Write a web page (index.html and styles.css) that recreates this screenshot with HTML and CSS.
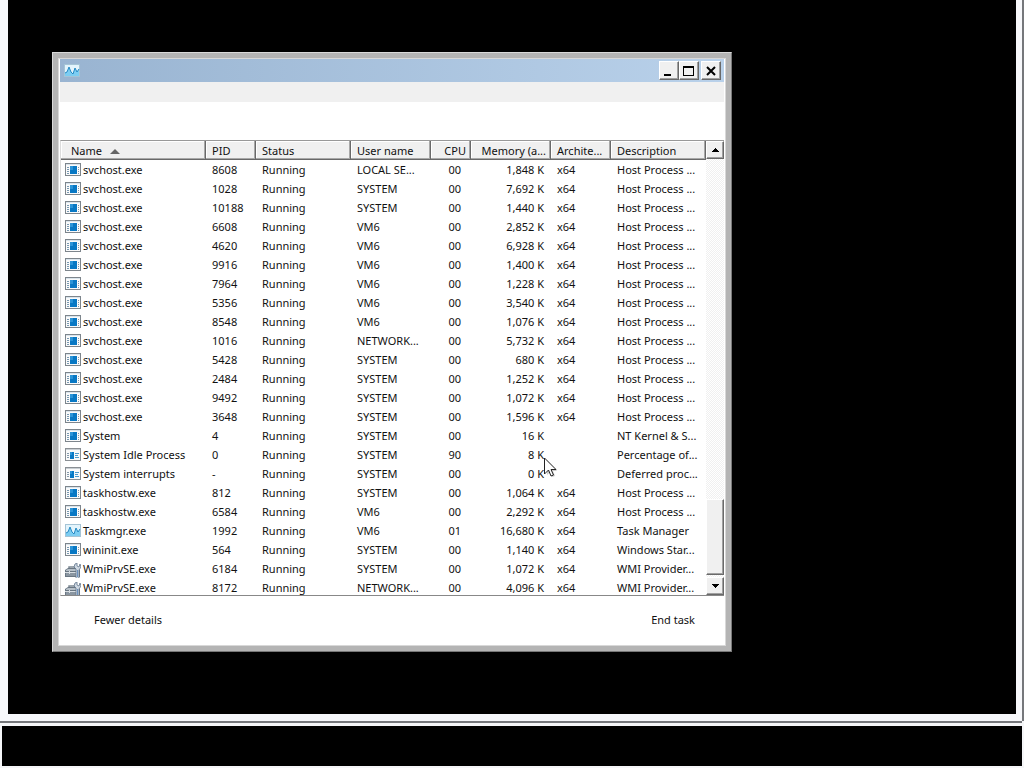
FILE: index.html
```html
<!DOCTYPE html>
<html lang="en">
<head>
<meta charset="utf-8">
<title>Task Manager</title>
<link rel="stylesheet" href="styles.css">
</head>
<body>
<svg class="defs" aria-hidden="true">
  <symbol id="app" viewBox="0 0 16 13">
    <path fill="#7d858c" d="M0 0h16v13H0z"/><path fill="#fafafa" d="M1 2h14v10H1z"/>
    <path fill="#d9e4ec" d="M1 1h14v1H1z"/><path fill="#0878c4" d="M5 3h7v8H5z"/><path fill="#2b94d8" d="M5 3h3v4H5z"/>
    <path stroke="#7898b0" d="M2 4.5h2M2 6.5h2M2 8.5h2M2 10.5h2M13 4.5h1M13 6.5h1M13 8.5h1M13 10.5h1"/>
  </symbol>
  <symbol id="sys" viewBox="0 0 16 13">
    <path fill="#8a8f94" d="M0 0h16v13H0z"/><path fill="#fafafa" d="M1 2h14v10H1z"/>
    <path fill="#c8ced3" d="M1 1h14v1H1z"/><path fill="#0878c4" d="M5 4h4v7H5z"/><path fill="#2b94d8" d="M5 4h2v3H5z"/>
    <path stroke="#8499aa" d="M2 5.5h2M2 7.5h2M2 9.5h2"/><path stroke="#4d9bcd" d="M10 5.5h4M10 7.5h3M10 9.5h4"/>
  </symbol>
  <symbol id="chart" viewBox="0 0 16 13">
    <path fill="#a5c4d6" d="M0 0h16v13H0z"/><path fill="#e3f4fc" d="M1 1h14v11H1z"/>
    <path fill="#7ccdf2" d="M1 9l2-1 2-5 2 5 2 2 2-6 2 4 2-3v7H1z"/>
    <path fill="none" stroke="#2389c4" d="M1 9l2-1 2-5 2 5 2 2 2-6 2 4 2-3"/>
  </symbol>
  <symbol id="tool" viewBox="0 0 16 16">
    <path fill="none" stroke="#7c8893" stroke-width="1.5" d="M4 6V4h6v2"/>
    <path fill="#697682" d="M0 7l3-2h10l2 2v7H0z"/><path fill="#b7c0c8" d="M1 7l2-1h9l-1 2H1z"/>
    <path fill="#8a96a1" d="M1 10h10v3H1z"/><path stroke="#d8dee3" d="M0 9.5h11M4.500 8v3"/>
    <path fill="#cfd9e3" stroke="#60748a" stroke-width=".8" d="M10 1l2-1v3l2 1 1-3 1 3-2 3v8l-2 1-1-1V6L9 4z"/>
    <path stroke="#6c92c0" d="M12.500 7v7"/>
  </symbol>
</svg>
<div class="screen">
  <main class="desktop">
    <section class="window" aria-label="Task Manager">
      <header class="titlebar">
        <svg class="title-icon"><use href="#chart"/></svg>
        <div class="controls">
          <button aria-label="Minimize"><svg viewBox="0 0 16 14"><path fill="#000" d="M3 10h7v2H3z"/></svg></button>
          <button aria-label="Maximize"><svg viewBox="0 0 16 14"><path fill="#000" fill-rule="evenodd" d="M2 2h11v10H2zM3 4v7h9V4z"/></svg></button>
          <button class="close" aria-label="Close"><svg viewBox="0 0 16 14"><path fill="none" stroke="#000" stroke-width="2" d="M4 3l8 8M12 3l-8 8"/></svg></button>
        </div>
      </header>
      <div class="menubar"></div>
      <div class="tabs"></div>
      <div class="list">
        <div class="viewport">
        <table>
          <colgroup><col class="c-name"><col class="c-pid"><col class="c-status"><col class="c-user"><col class="c-cpu"><col class="c-mem"><col class="c-arch"><col></colgroup>
          <thead><tr><th class="first">Name<svg class="sort" viewBox="0 0 10 5"><path fill="#666" d="M5 0l5 5H0z"/></svg></th><th>PID</th><th>Status</th><th>User name</th><th class="num">CPU</th><th class="num">Memory (a...</th><th>Archite...</th><th>Description</th></tr></thead>
          <tbody>
            <tr><td><svg><use href="#app"/></svg>svchost.exe</td><td>8608</td><td>Running</td><td>LOCAL SE...</td><td>00</td><td>1,848 K</td><td>x64</td><td>Host Process ...</td></tr>
            <tr><td><svg><use href="#app"/></svg>svchost.exe</td><td>1028</td><td>Running</td><td>SYSTEM</td><td>00</td><td>7,692 K</td><td>x64</td><td>Host Process ...</td></tr>
            <tr><td><svg><use href="#app"/></svg>svchost.exe</td><td>10188</td><td>Running</td><td>SYSTEM</td><td>00</td><td>1,440 K</td><td>x64</td><td>Host Process ...</td></tr>
            <tr><td><svg><use href="#app"/></svg>svchost.exe</td><td>6608</td><td>Running</td><td>VM6</td><td>00</td><td>2,852 K</td><td>x64</td><td>Host Process ...</td></tr>
            <tr><td><svg><use href="#app"/></svg>svchost.exe</td><td>4620</td><td>Running</td><td>VM6</td><td>00</td><td>6,928 K</td><td>x64</td><td>Host Process ...</td></tr>
            <tr><td><svg><use href="#app"/></svg>svchost.exe</td><td>9916</td><td>Running</td><td>VM6</td><td>00</td><td>1,400 K</td><td>x64</td><td>Host Process ...</td></tr>
            <tr><td><svg><use href="#app"/></svg>svchost.exe</td><td>7964</td><td>Running</td><td>VM6</td><td>00</td><td>1,228 K</td><td>x64</td><td>Host Process ...</td></tr>
            <tr><td><svg><use href="#app"/></svg>svchost.exe</td><td>5356</td><td>Running</td><td>VM6</td><td>00</td><td>3,540 K</td><td>x64</td><td>Host Process ...</td></tr>
            <tr><td><svg><use href="#app"/></svg>svchost.exe</td><td>8548</td><td>Running</td><td>VM6</td><td>00</td><td>1,076 K</td><td>x64</td><td>Host Process ...</td></tr>
            <tr><td><svg><use href="#app"/></svg>svchost.exe</td><td>1016</td><td>Running</td><td>NETWORK...</td><td>00</td><td>5,732 K</td><td>x64</td><td>Host Process ...</td></tr>
            <tr><td><svg><use href="#app"/></svg>svchost.exe</td><td>5428</td><td>Running</td><td>SYSTEM</td><td>00</td><td>680 K</td><td>x64</td><td>Host Process ...</td></tr>
            <tr><td><svg><use href="#app"/></svg>svchost.exe</td><td>2484</td><td>Running</td><td>SYSTEM</td><td>00</td><td>1,252 K</td><td>x64</td><td>Host Process ...</td></tr>
            <tr><td><svg><use href="#app"/></svg>svchost.exe</td><td>9492</td><td>Running</td><td>SYSTEM</td><td>00</td><td>1,072 K</td><td>x64</td><td>Host Process ...</td></tr>
            <tr><td><svg><use href="#app"/></svg>svchost.exe</td><td>3648</td><td>Running</td><td>SYSTEM</td><td>00</td><td>1,596 K</td><td>x64</td><td>Host Process ...</td></tr>
            <tr><td><svg><use href="#app"/></svg>System</td><td>4</td><td>Running</td><td>SYSTEM</td><td>00</td><td>16 K</td><td></td><td>NT Kernel &amp; S...</td></tr>
            <tr><td><svg><use href="#sys"/></svg>System Idle Process</td><td>0</td><td>Running</td><td>SYSTEM</td><td>90</td><td>8 K</td><td></td><td>Percentage of...</td></tr>
            <tr><td><svg><use href="#sys"/></svg>System interrupts</td><td>-</td><td>Running</td><td>SYSTEM</td><td>00</td><td>0 K</td><td></td><td>Deferred proc...</td></tr>
            <tr><td><svg><use href="#app"/></svg>taskhostw.exe</td><td>812</td><td>Running</td><td>SYSTEM</td><td>00</td><td>1,064 K</td><td>x64</td><td>Host Process ...</td></tr>
            <tr><td><svg><use href="#app"/></svg>taskhostw.exe</td><td>6584</td><td>Running</td><td>VM6</td><td>00</td><td>2,292 K</td><td>x64</td><td>Host Process ...</td></tr>
            <tr><td><svg><use href="#chart"/></svg>Taskmgr.exe</td><td>1992</td><td>Running</td><td>VM6</td><td>01</td><td>16,680 K</td><td>x64</td><td>Task Manager</td></tr>
            <tr><td><svg><use href="#app"/></svg>wininit.exe</td><td>564</td><td>Running</td><td>SYSTEM</td><td>00</td><td>1,140 K</td><td>x64</td><td>Windows Star...</td></tr>
            <tr><td><svg class="tall"><use href="#tool"/></svg>WmiPrvSE.exe</td><td>6184</td><td>Running</td><td>SYSTEM</td><td>00</td><td>1,072 K</td><td>x64</td><td>WMI Provider...</td></tr>
            <tr><td><svg class="tall"><use href="#tool"/></svg>WmiPrvSE.exe</td><td>8172</td><td>Running</td><td>NETWORK...</td><td>00</td><td>4,096 K</td><td>x64</td><td>WMI Provider...</td></tr>
          </tbody>
        </table>
        </div>
        <div class="scrollbar">
          <button aria-label="Scroll up"><svg viewBox="0 0 7 4"><path d="M3 0h1v1h1v1h1v1h1v1H0V3h1V2h1V1h1z"/></svg></button>
          <div class="track"><div class="thumb"></div></div>
          <button aria-label="Scroll down"><svg viewBox="0 0 7 4"><path d="M0 0h7v1H6v1H5v1H4v1H3V3H2V2H1V1H0z"/></svg></button>
        </div>
      </div>
      <footer class="actions"><button>Fewer details</button><button>End task</button></footer>
    </section>
    <svg class="cursor" viewBox="0 0 14 21"><path fill="#999" opacity=".5" d="M3 3l10 11H9l2 5-3 1-2-5-3 3z"/><path fill="#fff" stroke="#222" d="M.5 1v16l4-4 2.500 6 2.500-1-2.500-5.500h5z"/></svg>
  </main>
  <div class="taskbar"></div>
</div>
</body>
</html>
```
FILE: styles.css
```css
* { box-sizing: border-box; }
body { margin: 0; font: 11px/19px "Noto Sans", "Open Sans", sans-serif; color: #111; background: #f5f6f8; }
button { font: inherit; color: inherit; padding: 0; }
svg { display: block; }
.defs { position: absolute; width: 0; height: 0; }
.screen { display: flex; flex-direction: column; height: 100vh; }
.desktop { position: relative; flex: 1; background: #000; border: solid #f7f8fb; border-width: 0 6px 7px 8px; box-shadow: 0 2px #75777b, 2px 0 #75777b; margin: 0 2px 5px 0; }
.taskbar { height: 40px; margin: 0 2px 2px; background: #000; }

.window { position: absolute; left: 44px; top: 52px; width: 680px; display: flex; flex-direction: column; background: #fff; border: 6px solid #b4b4b4; padding: 1px 2px; box-shadow: inset 0 0 0 1px #d8d8d8; }
.window::before { content: ""; position: absolute; inset: -6px; border: 1px solid #d9d9d9; border-right-color: #787878; border-bottom-color: #787878; pointer-events: none; }
.titlebar { height: 23px; display: flex; align-items: center; justify-content: space-between; padding: 0 3px 0 4px; background: linear-gradient(90deg, #99b4d1, #b9d1ea); }
.title-icon { width: 16px; height: 13px; }
.controls { display: flex; }
.controls button, .scrollbar button, .thumb { background: #f0f0f0; border: 1px solid #fff; border-right-color: #696969; border-bottom-color: #696969; box-shadow: inset -1px -1px #a0a0a0; }
.controls button { width: 20px; height: 19px; }
.controls svg { width: 16px; height: 14px; margin: 0 1px; }
.controls .close { margin-left: 2px; }
.menubar { height: 20px; background: #f0f0f0; }
.tabs { height: 38px; }

.list { display: flex; height: 456px; border: 1px solid #999; border-left-color: #ddd; border-right: 0; border-bottom-color: #888; }
.viewport { flex: 1; min-width: 0; overflow: hidden; }
table { width: 100%; table-layout: fixed; border-collapse: separate; border-spacing: 0; }
.c-name { width: 145px; } .c-pid { width: 50px; } .c-status { width: 95px; } .c-user { width: 80px; }
.c-cpu { width: 40px; } .c-mem { width: 80px; } .c-arch { width: 60px; }
th, td { height: 19px; padding: 0 6px; font-weight: 400; text-align: left; white-space: nowrap; overflow: hidden; }
th { padding: 1px 4px 0 6px; background: #f0f0f0; border-right: 1px solid #696969; border-bottom: 1px solid #696969; box-shadow: inset -1px -1px #a8a8a8, inset 1px 1px #fff; line-height: 17px; }
th.first { padding-left: 10px; }
th.num, td:nth-child(5), td:nth-child(6) { text-align: right; }
td:nth-child(5) { padding-right: 10px; }
td:nth-child(6) { padding-right: 7px; }
td:first-child { padding-left: 4px; }
td svg { display: inline-block; width: 16px; height: 13px; margin-right: 2px; vertical-align: -2px; }
td svg.tall { height: 16px; margin: -2px 2px -2px 0; vertical-align: -4px; }
.sort { display: inline-block; width: 10px; height: 5px; margin-left: 8px; vertical-align: 1px; }

.scrollbar { width: 18px; display: flex; flex-direction: column; background: #f8f8f8; }
.scrollbar button { height: 18px; display: grid; place-items: center; }
.scrollbar button svg { width: 7px; height: 4px; }
.track { flex: 1; display: flex; flex-direction: column; justify-content: flex-end; padding-bottom: 2px; background: repeating-conic-gradient(#fff 0 25%, #f0f0f0 0 50%) 0 0 / 2px 2px; }
.thumb { height: 76px; }

.actions { height: 49px; display: flex; align-items: center; justify-content: space-between; padding: 0 29px 2px 34px; }
.actions button { border: 0; background: none; }
.cursor { position: absolute; left: 536px; top: 457px; width: 14px; height: 21px; }
```
